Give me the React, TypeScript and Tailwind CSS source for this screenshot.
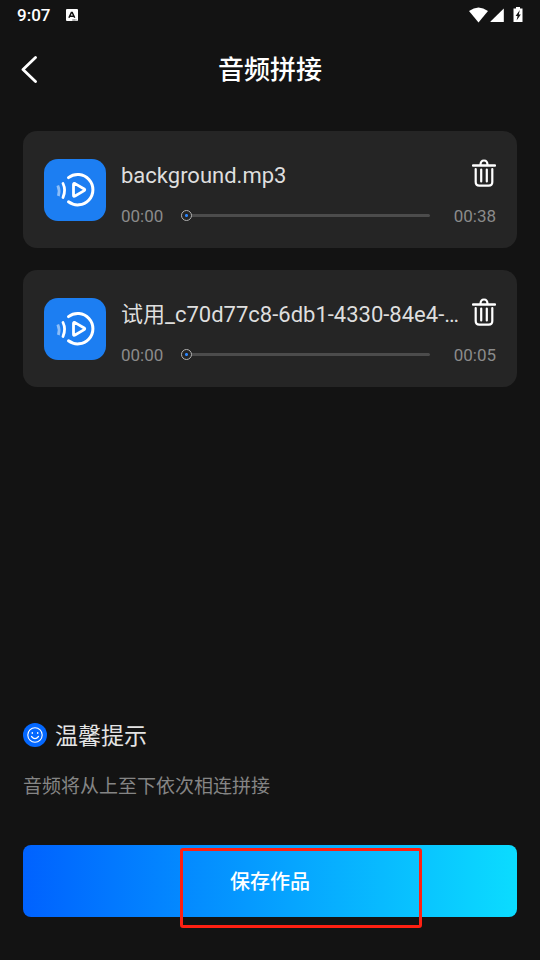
import React, { useState } from 'react';

interface Track {
    id: number;
    name: string;
    duration: number;
}

const initialTracks: Track[] = [
    { id: 1, name: 'background.mp3', duration: 38 },
    { id: 2, name: '试用_c70d77c8-6db1-4330-84e4-…', duration: 5 }
];

const formatTime = (seconds: number) => {
    const m = String(Math.floor(seconds / 60)).padStart(2, '0');
    const s = String(seconds % 60).padStart(2, '0');
    return `${m}:${s}`;
};

const StatusBar = () => (
    <div className="flex h-[30px] items-center justify-between pl-[17px] pr-4">
        <div className="flex items-center gap-4">
            <span className="text-[17px] leading-[30px] font-medium">9:07</span>
            <svg className="h-3 w-3" viewBox="0 0 12 12">
                <rect width="12" height="12" rx="1" fill="#fff" />
                <path d="M2.900 8.800 5.400 3.400H6.200L8.700 8.800M4 7.200H7.600" fill="none" stroke="#131313" strokeWidth="1.500" />
                <path d="M6.500 11H10.500" stroke="#131313" strokeWidth="1" strokeDasharray="1.2 .6" />
            </svg>
        </div>
        <svg className="h-[18px] w-[55px]" viewBox="0 0 55 18">
            <path d="M0 5Q9.500-2 19 5L9.500 16.500Z" fill="#fff" />
            <path d="M21.500 16V15.600L34.800 2.500V16Z" fill="#fff" />
            <path d="M44.500 2.500H47V1H51V2.500H53.500V16H44.500Z" fill="#fff" />
            <path d="M50.800 4 46.600 10H48.600L47.600 14.500 51.800 8.400H49.800Z" fill="#131313" />
        </svg>
    </div>
);

const PlayBadge = () => (
    <svg className="h-[62px] w-[62px] shrink-0" viewBox="0 0 62 62" fill="none" strokeLinecap="round" strokeLinejoin="round">
        <rect width="62" height="62" rx="14" fill="#1c7ef2" />
        <path d="M24.500 18.600A15.200 15.200 0 1 1 24.500 42.800" stroke="#fff" strokeWidth="3" />
        <path d="M29.500 25.500Q29.500 23.800 31 24.600L40.200 30Q41.300 30.800 40.200 31.600L31 37Q29.500 37.800 29.500 36.200Z" stroke="#fff" strokeWidth="2.800" />
        <path d="M19 24.500Q22.200 31 19 38.500" stroke="#fff" strokeWidth="2.800" />
        <path d="M13.800 26.500Q16 31.500 14.400 37" stroke="#8dbef8" strokeWidth="2.800" strokeLinecap="butt" />
    </svg>
);

const TrashIcon = () => (
    <svg className="h-7 w-6" viewBox="0 0 24 28" fill="none" stroke="#fff" strokeLinecap="round" strokeLinejoin="round">
        <path d="M1 6.500H23" strokeWidth="2.400" />
        <path d="M8.500 6Q8.500 1.500 12 1.500T15.500 6" strokeWidth="2.200" />
        <path d="M3.700 10V23Q3.700 26.600 7.300 26.600H16.700Q20.300 26.600 20.300 23V10" strokeWidth="2.200" />
        <path d="M9.200 10.500V22.500M14.800 10.500V22.500" strokeWidth="2.200" />
    </svg>
);

const SmileIcon = () => (
    <svg className="h-6 w-6 shrink-0" viewBox="0 0 24 24" fill="none" stroke="#fff" strokeLinecap="round">
        <circle cx="12" cy="12" r="12" fill="#0468ff" stroke="none" />
        <circle cx="12" cy="12" r="7.200" strokeWidth="1.100" />
        <path d="M8.500 13.500Q12 17.800 15.500 13.500" strokeWidth="1.200" />
        <path d="M9.300 9.800V10.300M14.700 9.800V10.300" strokeWidth="1.500" />
    </svg>
);

interface TrackCardProps {
    track: Track;
    onDelete: (id: number) => void;
}

const TrackCard: React.FC<TrackCardProps> = ({ track, onDelete }) => {
    const [position, setPosition] = useState(0);

    return (
        <li className="flex items-center gap-[15px] rounded-[14px] bg-[#252525] px-[21px] pt-7 pb-[19px]">
            <div className="-mt-2 shrink-0">
                <PlayBadge />
            </div>
            <div className="min-w-0 flex-1">
                <div className="flex items-center justify-between gap-2">
                    <h2 className="min-w-0 truncate text-[22px] leading-[34px] text-[#dedede]">{track.name}</h2>
                    <button type="button" aria-label={`删除 ${track.name}`} onClick={() => onDelete(track.id)} className="-mt-1.5 shrink-0">
                        <TrashIcon />
                    </button>
                </div>
                <div className="mt-2.5 flex items-center text-[17px] leading-[26px] text-[#8b8b8b]">
                    <span>{formatTime(position)}</span>
                    <input
                        type="range"
                        aria-label={track.name}
                        min={0}
                        max={track.duration}
                        value={position}
                        onChange={(e) => setPosition(Number(e.target.value))}
                        className="mr-6 mb-0.5 ml-[18px] h-3 min-w-0 flex-1 appearance-none bg-transparent [&::-webkit-slider-runnable-track]:h-[3px] [&::-webkit-slider-runnable-track]:rounded-full [&::-webkit-slider-runnable-track]:bg-[#4c4c4c] [&::-webkit-slider-thumb]:-mt-1 [&::-webkit-slider-thumb]:h-[11px] [&::-webkit-slider-thumb]:w-[11px] [&::-webkit-slider-thumb]:appearance-none [&::-webkit-slider-thumb]:rounded-full [&::-webkit-slider-thumb]:border [&::-webkit-slider-thumb]:border-[#b0b0b0] [&::-webkit-slider-thumb]:bg-[radial-gradient(circle,#2b86ff_1px,#252525_2px)]"
                    />
                    <span>{formatTime(track.duration)}</span>
                </div>
            </div>
        </li>
    );
};

const App: React.FC = () => {
    const [tracks, setTracks] = useState<Track[]>(initialTracks);

    const handleDelete = (id: number) => {
        setTracks(tracks.filter((t) => t.id !== id));
    };

    return (
        <div className="flex min-h-screen flex-col bg-[#131313] font-[Roboto,'Noto_Sans_CJK_SC',sans-serif] text-white">
            <StatusBar />

            <header className="grid h-20 grid-cols-[1fr_auto_1fr] items-center px-5">
                <button type="button" aria-label="返回" className="justify-self-start">
                    <svg className="h-7 w-[18px]" viewBox="0 0 18 28" fill="none" stroke="#fff" strokeWidth="2.800" strokeLinecap="round" strokeLinejoin="round">
                        <path d="M15.500 1.500 3 13.500 15.500 25.500" />
                    </svg>
                </button>
                <h1 className="text-[26px] leading-9 font-medium">音频拼接</h1>
            </header>

            <ul className="mt-[21px] flex flex-col gap-[22px] px-[23px]">
                {tracks.map((track) => (
                    <TrackCard key={track.id} track={track} onDelete={handleDelete} />
                ))}
            </ul>

            <footer className="mt-auto px-[23px] pb-[43px]">
                <div className="flex items-center gap-2">
                    <SmileIcon />
                    <h2 className="pt-1 text-[23px] leading-8 text-[#e4e4e4]">温馨提示</h2>
                </div>
                <p className="mt-5 text-[19px] leading-7 text-[#858585]">音频将从上至下依次相连拼接</p>

                <div className="relative mt-11">
                    <button type="button" className="h-[72px] w-full rounded-lg bg-linear-to-r/srgb from-[#0062ff] to-[#0bdcff] pt-0.5 text-[20px] font-medium">
                        保存作品
                    </button>
                    <div className="pointer-events-none absolute top-[3px] left-[157px] h-20 w-[242px] rounded-[3px] border-3 border-[#ff2012]" />
                </div>
            </footer>
        </div>
    );
};

export default App;
